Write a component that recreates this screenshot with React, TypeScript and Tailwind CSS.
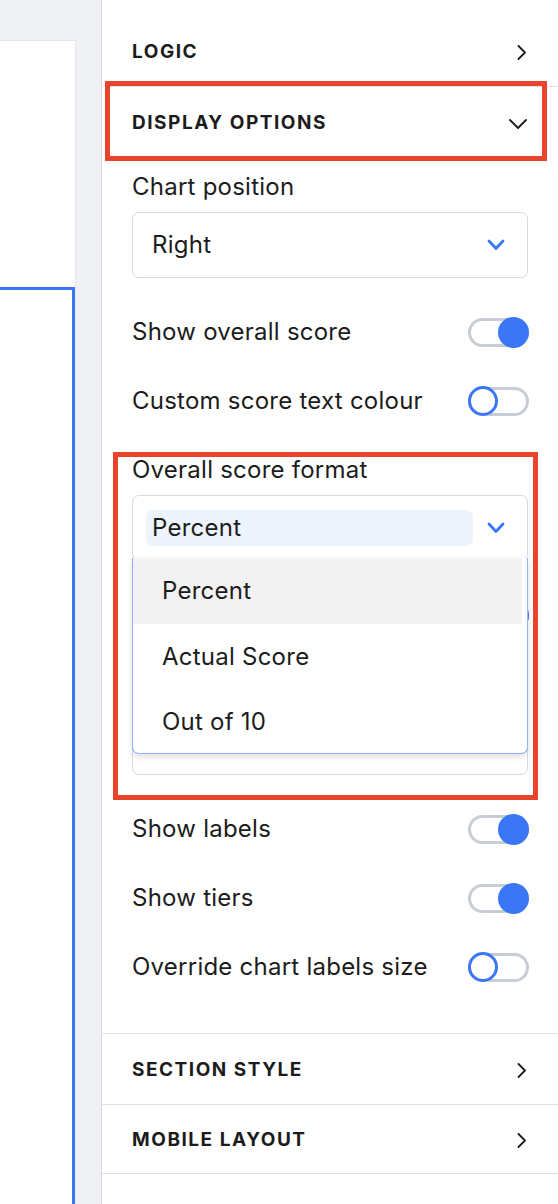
import React from 'react';

const font = { fontFamily: 'Inter, "Noto Sans", sans-serif' };

function ChevronRight() {
  return (
    <svg width="10" height="15" viewBox="0 0 10 15" fill="none">
      <polyline points="1.5,1 8,7.5 1.5,14" stroke="#1c1c1c" strokeWidth="1.8" strokeLinecap="round" strokeLinejoin="round" />
    </svg>
  );
}

function ChevronDown() {
  return (
    <svg width="18" height="10" viewBox="0 0 18 10" fill="none">
      <polyline points="1,1 9,9 17,1" stroke="#1c1c1c" strokeWidth="1.8" strokeLinecap="round" strokeLinejoin="round" />
    </svg>
  );
}

function BlueChevron() {
  return (
    <svg width="18" height="12" viewBox="0 0 18 12" fill="none">
      <polyline points="2,2 9,9.5 16,2" stroke="#3b76f6" strokeWidth="2.8" strokeLinecap="round" strokeLinejoin="round" />
    </svg>
  );
}

function Toggle({ on }: { on: boolean }) {
  return (
    <div className="relative w-[61px] h-[30px] shrink-0 -mr-[1px]">
      <div className="absolute left-0 right-0 top-[1px] h-[29px] rounded-full border-[3px] border-[#c8ccd3] bg-white" />
      {on ? (
        <div className="absolute right-0 top-0 w-[31px] h-[31px] rounded-full bg-[#3b76f6]" />
      ) : (
        <div className="absolute left-0 top-0 w-[30px] h-[30px] rounded-full border-[3px] border-[#3b76f6] bg-white" />
      )}
    </div>
  );
}

function ToggleRow({ label, on, className }: { label: string; on: boolean; className?: string }) {
  return (
    <div className={`flex items-center justify-between h-[40px] ${className || ''}`}>
      <span className="text-[24px] tracking-[0.01em] text-[#1c1c1c]">{label}</span>
      <Toggle on={on} />
    </div>
  );
}

function Header({ title, open, className }: { title: string; open?: boolean; className?: string }) {
  return (
    <div className={`flex items-center justify-between pl-[30px] pr-[31px] ${className || ''}`}>
      <span className="text-[19px] font-bold tracking-[0.08em] text-[#1c1c1c]">{title}</span>
      {open ? <ChevronDown /> : <ChevronRight />}
    </div>
  );
}

export default function App() {
  return (
    <div className="relative flex w-[558px] h-[1204px] overflow-hidden bg-white" style={font}>
      {/* canvas on the left */}
      <div className="w-[101px] shrink-0 bg-[#f0f1f5] pt-[40px] flex flex-col">
        <div className="w-[76px] flex-1 flex flex-col bg-white border-t border-r border-[#e3e5ea]">
          <div className="h-[246px]" />
          <div className="flex-1 border-t-[3px] border-r-[3px] border-[#3b76f6]" />
        </div>
      </div>

      {/* settings panel */}
      <div className="flex-1 flex flex-col border-l border-[#d5d8de] bg-white">
        <Header title="LOGIC" className="h-[87px] pt-[18px] border-b border-[#dfe1e6]" />
        <Header title="DISPLAY OPTIONS" open className="h-[71px] pt-[2px]" />

        <div className="px-[30px] pb-[46px]">
          <div className="pt-[15px] h-[43px] leading-[28px] text-[24px] tracking-[0.01em] text-[#1c1c1c]">Chart position</div>
          <div className="mt-[11px] h-[66px] rounded-[7px] border border-[#d5d9e0] flex items-center justify-between pl-[19px] pr-[22px]">
            <span className="text-[24px] tracking-[0.01em] text-[#1c1c1c]">Right</span>
            <BlueChevron />
          </div>

          <ToggleRow label="Show overall score" on className="mt-[34px]" />
          <ToggleRow label="Custom score text colour" on={false} className="mt-[29px]" />

          <div className="mt-[35px] h-[28px] leading-[28px] text-[24px] tracking-[0.01em] text-[#1c1c1c]">Overall score format</div>
          <div className="relative mt-[11px]">
            <div className="h-[66px] rounded-[7px] border border-[#d5d9e0] flex items-center justify-between pl-[13px] pr-[22px]">
              <div className="flex-1 mr-[14px] h-[36px] rounded-[7px] bg-[#edf4fe] flex items-center pl-[6px]">
                <span className="text-[24px] tracking-[0.01em] text-[#1c1c1c]">Percent</span>
              </div>
              <BlueChevron />
            </div>

            {/* fields hidden behind the open menu */}
            <div className="mt-[34px] h-[40px] flex items-center justify-end">
              <Toggle on />
            </div>
            <div className="mt-[35px] h-[28px]" />
            <div className="mt-[11px] h-[66px] rounded-[7px] border border-[#d5d9e0]" />

            {/* open dropdown menu */}
            <div className="absolute left-0 right-0 top-[63px] h-[196px] bg-white border border-t-0 border-[#8fb1f7] rounded-b-[7px] shadow-[0_3px_6px_rgba(0,0,0,0.12)] flex flex-col">
              <div className="h-[66px] mr-[5px] bg-[#f2f2f2] flex items-center pl-[29px] text-[24px] tracking-[0.01em] text-[#1c1c1c]">Percent</div>
              <div className="h-[66px] flex items-center pl-[29px] text-[24px] tracking-[0.01em] text-[#1c1c1c]">Actual Score</div>
              <div className="h-[63px] flex items-center pl-[29px] text-[24px] tracking-[0.01em] text-[#1c1c1c]">Out of 10</div>
            </div>
          </div>

          <ToggleRow label="Show labels" on className="mt-[34px]" />
          <ToggleRow label="Show tiers" on className="mt-[29px]" />
          <ToggleRow label="Override chart labels size" on={false} className="mt-[29px]" />
        </div>

        <Header title="SECTION STYLE" className="h-[71px] pt-[2px] border-t border-[#dfe1e6]" />
        <Header title="MOBILE LAYOUT" className="h-[70px] pt-[3px] border-t border-b border-[#dfe1e6]" />
      </div>

      {/* annotation boxes */}
      <div className="absolute left-[105px] top-[81px] w-[442px] h-[80px] border-[5px] border-[#e8442b]" />
      <div className="absolute left-[113px] top-[452px] w-[425px] h-[348px] border-[5px] border-[#e8442b]" />
    </div>
  );
}
